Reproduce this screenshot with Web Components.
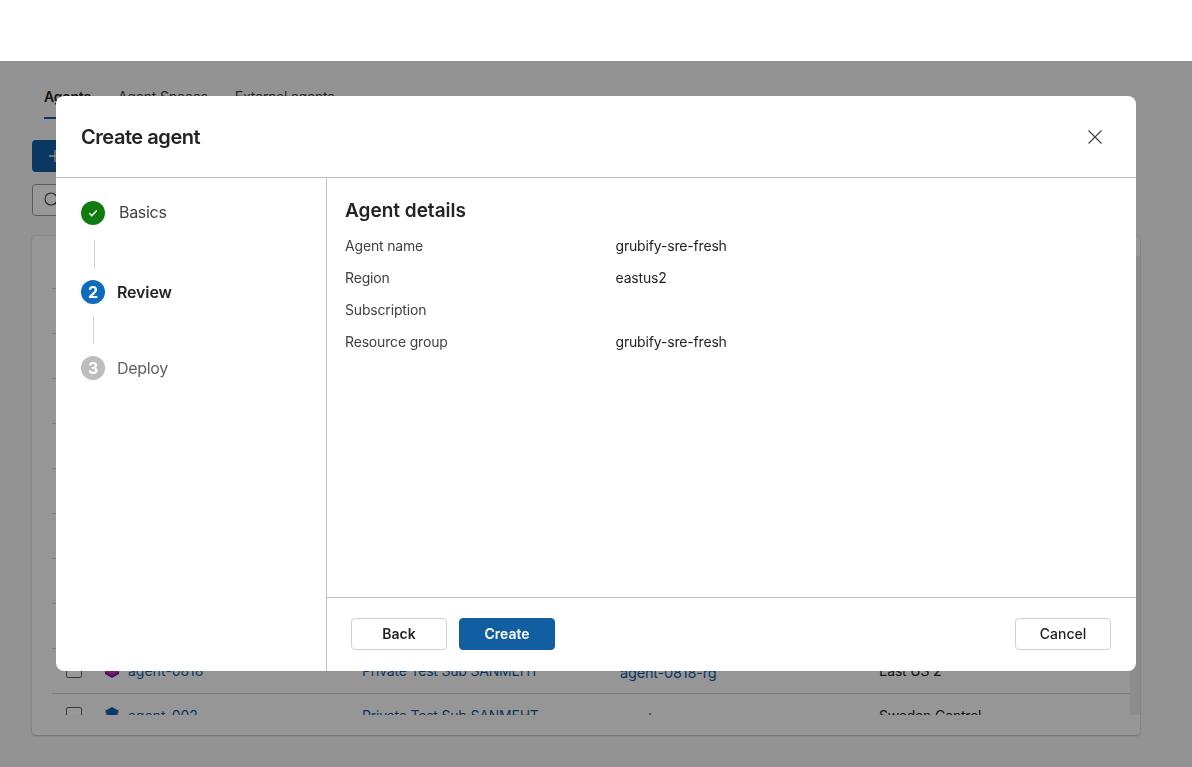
<!DOCTYPE html>
<html lang="en">
<head>
<meta charset="utf-8">
<title>Create agent</title>
<style>
  html, body { margin: 0; height: 100%; overflow: hidden; background: #fff; }
  body { font-family: Inter, "Liberation Sans", sans-serif; }
</style>
</head>
<body>
<app-shell>
  <agent-tabs slot="tabs">
    <tab-item active>Agents</tab-item>
    <tab-item>Agent Spaces</tab-item>
    <tab-item>External agents</tab-item>
  </agent-tabs>
  <agent-toolbar slot="toolbar"></agent-toolbar>
  <agent-table slot="table">
    <agent-row></agent-row><agent-row></agent-row><agent-row></agent-row><agent-row></agent-row><agent-row></agent-row>
    <agent-row></agent-row><agent-row></agent-row><agent-row></agent-row><agent-row></agent-row>
    <agent-row name="agent-0818" sub="Private Test Sub SANMEHT" group="agent-0818-rg" region="East US 2" tint="#1487b8"></agent-row>
    <agent-row name="agent-002" sub="Private Test Sub SANMEHT" group="our-team" region="Sweden Central" tint="#0f5fb0"></agent-row>
  </agent-table>
  <wizard-dialog slot="dialog" heading="Create agent">
    <wizard-step slot="steps" state="done" label="Basics"></wizard-step>
    <wizard-step slot="steps" state="current" number="2" label="Review"></wizard-step>
    <wizard-step slot="steps" state="todo" number="3" label="Deploy" last></wizard-step>
    <h2-title>Agent details</h2-title>
    <detail-row label="Agent name" value="grubify-sre-fresh"></detail-row>
    <detail-row label="Region" value="eastus2"></detail-row>
    <detail-row label="Subscription" value=""></detail-row>
    <detail-row label="Resource group" value="grubify-sre-fresh"></detail-row>
    <ui-button slot="footer-start">Back</ui-button>
    <ui-button slot="footer-start" primary>Create</ui-button>
    <ui-button slot="footer-end" light>Cancel</ui-button>
  </wizard-dialog>
</app-shell>

<script>
class AppShell extends HTMLElement {
  constructor() {
    super();
    this.attachShadow({ mode: "open" }).innerHTML = `
      <style>
        :host { display: block; height: 767px; position: relative; overflow: hidden; color: #242424; font-size: 14px; }
        .top { height: 61px; background: #fff; }
        main { height: 706px; box-sizing: border-box; background: #f5f5f5; padding: 23px 52px 0 32px; }
        .veil { position: absolute; left: 0; right: 0; top: 61px; bottom: 0; background: rgba(0,0,0,.4); backdrop-filter: blur(.6px); }
        .center { position: absolute; left: 56px; top: 96px; }
      </style>
      <div class="top"></div>
      <main>
        <slot name="tabs"></slot>
        <slot name="toolbar"></slot>
        <slot name="table"></slot>
      </main>
      <div class="veil"></div>
      <div class="center"><slot name="dialog"></slot></div>`;
  }
}

class AgentTabs extends HTMLElement {
  constructor() {
    super();
    this.attachShadow({ mode: "open" }).innerHTML = `
      <style>:host { display: flex; gap: 27px; padding-left: 12px; height: 35px; letter-spacing: -.2px; }</style>
      <slot></slot>`;
  }
}

class TabItem extends HTMLElement {
  constructor() {
    super();
    this.attachShadow({ mode: "open" }).innerHTML = `
      <style>
        :host { display: block; box-sizing: border-box; height: 35px; padding-top: 3px; line-height: 20px; font-size: 14px; color: #424242; border-bottom: 2px solid transparent; }
        :host([active]) { color: #242424; font-weight: 600; border-bottom-color: #115ea3; }
      </style>
      <slot></slot>`;
  }
}

class AgentToolbar extends HTMLElement {
  constructor() {
    super();
    this.attachShadow({ mode: "open" }).innerHTML = `
      <style>
        :host { display: flex; flex-direction: column; align-items: flex-start; gap: 12px; padding-top: 21px; }
        .add { width: 130px; height: 32px; background: #115ea3; border-radius: 4px; display: flex; align-items: center; padding-left: 13px; box-sizing: border-box; }
        .search { width: 240px; height: 32px; box-sizing: border-box; border: 1px solid #9a9a9a; border-radius: 4px; background: #fff; display: flex; align-items: center; padding-left: 10px; }
      </style>
      <div class="add"><svg width="20" height="20" viewBox="0 0 20 20"><path d="M10 4v12M4 10h12" stroke="#dfe8f2" stroke-width="1.3" fill="none"/></svg></div>
      <div class="search"><svg width="18" height="18" viewBox="0 0 18 18"><circle cx="8" cy="8" r="6" stroke="#424242" stroke-width="1.1" fill="none"/><path d="M12.5 12.5l4 4" stroke="#424242" stroke-width="1.1"/></svg></div>`;
  }
}

class AgentTable extends HTMLElement {
  constructor() {
    super();
    this.attachShadow({ mode: "open" }).innerHTML = `
      <style>
        :host { display: flex; box-sizing: border-box; height: 499px; margin-top: 20px; background: #fbfbfb; border-radius: 4px; box-shadow: 0 0 2px rgba(0,0,0,.2), 0 1px 2px rgba(0,0,0,.18); padding: 8px 0 20px 20px; }
        .rows { flex: 1; overflow: hidden; min-width: 0; }
        .bar { width: 10px; margin-top: 12px; background: #ececec; }
      </style>
      <div class="rows"><slot></slot></div>
      <div class="bar"></div>`;
  }
}

class AgentRow extends HTMLElement {
  constructor() {
    super();
    const name = this.getAttribute("name");
    const tint = this.getAttribute("tint") || "#1487b8";
    const cells = name ? `
      <span class="check"></span>
      <span class="name">
        <svg width="16" height="16" viewBox="0 0 16 16">
          <path d="M8 6.5l7 3v2.6L8 16l-7-3.9V9.5z" fill="#7d1fa0"/>
          <path d="M8 4l6.5 3.4v2.2L8 13 1.5 9.6V7.4z" fill="#c83ea6"/>
          <path d="M8 0l6.5 3.4v2.4L8 9.6 1.5 5.8V3.4z" fill="${tint}"/>
        </svg>
        <a>${name}</a>
      </span>
      <a>${this.getAttribute("sub")}</a>
      <a class="big">${this.getAttribute("group")}</a>
      <span>${this.getAttribute("region")}</span>` : "";
    this.attachShadow({ mode: "open" }).innerHTML = `
      <style>
        :host { display: grid; grid-template-columns: 52px 258px 258px 259px 1fr; align-items: center; box-sizing: border-box; height: 45px; padding-bottom: 2px; border-bottom: 1px solid #d1d1d1; font-size: 14px; letter-spacing: -.2px; color: #242424; }
        a { color: #115ea3; }
        .big { font-size: 14.5px; padding-top: 4px; }
        .check { display: block; width: 14px; height: 14px; margin-left: 14px; border: 1px solid #616161; border-radius: 2px; background: #fff; }
        .name { display: flex; align-items: center; gap: 8px; letter-spacing: 0; }
      </style>
      ${cells}`;
  }
}

class WizardDialog extends HTMLElement {
  constructor() {
    super();
    this.attachShadow({ mode: "open" }).innerHTML = `
      <style>
        :host { display: flex; flex-direction: column; width: 1080px; height: 575px; background: #fff; border-radius: 8px; overflow: hidden; color: #242424; }
        header { flex: none; height: 82px; box-sizing: border-box; border-bottom: 1px solid #c2c2c2; display: flex; align-items: center; justify-content: space-between; padding: 0 33px 0 25px; }
        h1 { margin: 0; font-size: 20px; line-height: 28px; font-weight: 600; letter-spacing: -.45px; }
        .body { flex: 1; display: flex; min-height: 0; }
        nav { flex: none; width: 271px; box-sizing: border-box; border-right: 1px solid #c2c2c2; padding: 23px 0 0 25px; }
        .pane { flex: 1; display: flex; flex-direction: column; min-width: 0; }
        .content { flex: 1; padding: 21px 18px 0; }
        footer { flex: none; height: 74px; box-sizing: border-box; border-top: 1px solid #c2c2c2; padding: 20px 25px 0 24px; display: flex; justify-content: space-between; align-items: flex-start; }
        .group { display: flex; gap: 12px; }
        svg { display: block; }
      </style>
      <header>
        <h1>${this.getAttribute("heading")}</h1>
        <svg width="16" height="16" viewBox="0 0 16 16"><path d="M1.5 1.5l13 13M14.5 1.5l-13 13" stroke="#424242" stroke-width="1.2" fill="none"/></svg>
      </header>
      <div class="body">
        <nav><slot name="steps"></slot></nav>
        <div class="pane">
          <div class="content"><slot></slot></div>
          <footer>
            <div class="group"><slot name="footer-start"></slot></div>
            <div class="group"><slot name="footer-end"></slot></div>
          </footer>
        </div>
      </div>`;
  }
}

class WizardStep extends HTMLElement {
  constructor() {
    super();
    const state = this.getAttribute("state");
    const mark = state === "done"
      ? `<svg width="12" height="12" viewBox="0 0 12 12"><path d="M2.3 6.3l2.5 2.5 4.9-5.3" stroke="#fff" stroke-width="1.3" fill="none"/></svg>`
      : this.getAttribute("number");
    this.attachShadow({ mode: "open" }).innerHTML = `
      <style>
        :host { display: block; }
        .head { display: flex; align-items: center; gap: 12px; height: 24px; font-size: 16px; letter-spacing: -.3px; color: #616161; }
        .dot { flex: none; width: 24px; height: 24px; border-radius: 50%; display: flex; align-items: center; justify-content: center; color: #fff; font-size: 16px; font-weight: 700; background: #bdbdbd; }
        :host([state=done]) .dot { background: #107c10; }
        :host([state=done]) .head { gap: 14px; color: #424242; }
        :host([state=done]) .head span:last-child { padding-bottom: 2px; }
        :host([state=done]) { margin-bottom: -1px; }
        :host([state=current]) .dot { background: #0f6cbd; }
        :host([state=current]) .head { color: #242424; font-weight: 600; letter-spacing: -.15px; }
        .line { width: 1px; height: 28px; margin: 15px 0 13px 13px; background: #d1d1d1; }
        :host([state=current]) .line { margin: 12px 0 12px 12px; }
        :host([last]) .line { display: none; }
      </style>
      <div class="head"><span class="dot">${mark}</span><span>${this.getAttribute("label")}</span></div>
      <div class="line"></div>`;
  }
}

class H2Title extends HTMLElement {
  constructor() {
    super();
    this.attachShadow({ mode: "open" }).innerHTML = `
      <style>:host { display: block; font-size: 19px; line-height: 24px; font-weight: 600; margin-bottom: 6px; }</style>
      <slot></slot>`;
  }
}

class DetailRow extends HTMLElement {
  constructor() {
    super();
    this.attachShadow({ mode: "open" }).innerHTML = `
      <style>
        :host { display: grid; grid-template-columns: 270.5px 1fr; height: 32px; align-items: center; font-size: 14px; letter-spacing: -.17px; color: #242424; }
        .k { color: #424242; }
      </style>
      <span class="k">${this.getAttribute("label")}</span><span>${this.getAttribute("value")}</span>`;
  }
}

class UiButton extends HTMLElement {
  constructor() {
    super();
    this.attachShadow({ mode: "open" }).innerHTML = `
      <style>
        :host { display: flex; align-items: center; justify-content: center; box-sizing: border-box; width: 96px; height: 32px; padding-bottom: 1px; border: 1px solid #d1d1d1; border-radius: 4px; background: #fff; color: #242424; font-size: 14px; font-weight: 600; }
        :host([primary]) { background: #115ea3; border-color: #115ea3; color: #fff; }
        :host([light]) { font-weight: 500; }
      </style>
      <slot></slot>`;
  }
}

customElements.define("app-shell", AppShell);
customElements.define("agent-tabs", AgentTabs);
customElements.define("tab-item", TabItem);
customElements.define("agent-toolbar", AgentToolbar);
customElements.define("agent-table", AgentTable);
customElements.define("agent-row", AgentRow);
customElements.define("wizard-dialog", WizardDialog);
customElements.define("wizard-step", WizardStep);
customElements.define("h2-title", H2Title);
customElements.define("detail-row", DetailRow);
customElements.define("ui-button", UiButton);
</script>
</body>
</html>
